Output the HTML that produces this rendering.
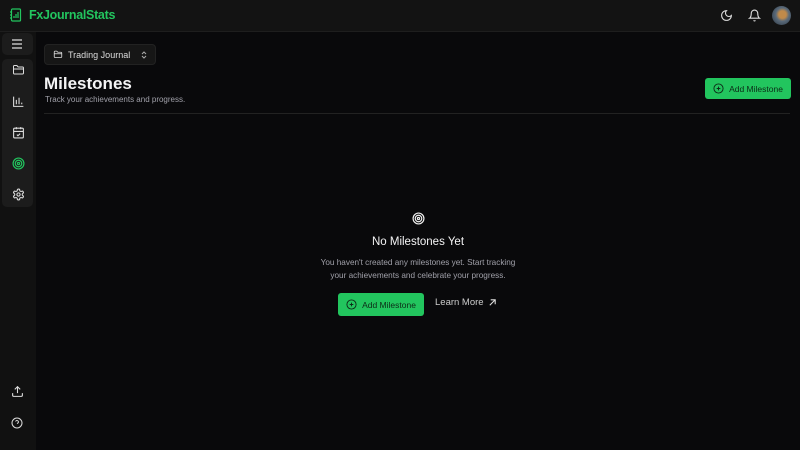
<!DOCTYPE html>
<html><head><meta charset="utf-8"><style>
*{margin:0;padding:0;box-sizing:border-box}
body{width:800px;height:450px;background:#09090b;font-family:"Liberation Sans","DejaVu Sans",sans-serif;color:#fff;overflow:hidden;position:relative}
.top{position:absolute;left:0;top:0;width:800px;height:32px;background:#131313;border-bottom:1px solid #1e1e1e}
.logo{position:absolute;left:10px;top:8px;display:flex;align-items:center;gap:7px;color:#22c55e;font-weight:bold;font-size:12.5px;letter-spacing:-0.3px}
.side{position:absolute;left:0;top:32px;width:36px;height:418px;background:#111}
.grp{position:absolute;left:2px;width:31px;background:#1c1c1c;border-radius:5px}
.ic{position:absolute;left:10px}
svg{display:block}
.sel{position:absolute;left:44px;top:44px;width:112px;height:21px;background:#161616;border:1px solid #222;border-radius:4px;font-size:9px;color:#ddd;display:flex;align-items:center;padding-left:8px;gap:5px}
h1{position:absolute;left:44px;top:74px;font-size:17px;font-weight:bold;color:#f4f4f5}
.sub{position:absolute;left:45px;top:95px;font-size:8px;color:#a1a1aa}
.hr{position:absolute;left:44px;right:10px;top:113px;height:1px;background:#222}
.btn{position:absolute;background:#22c55e;border-radius:3px;color:#0d2b17;font-size:8.5px;display:flex;align-items:center;justify-content:center;gap:5px}
.c{position:absolute;left:0;width:836px;text-align:center}
</style></head><body>
<div class="top">
 <div class="logo"><svg width="12" height="14" viewBox="0 0 12 14" fill="none" stroke="#22c55e" stroke-width="1.2"><rect x="1.5" y="1" width="9" height="12" rx="1"/><path d="M4 10V8M6 10V6M8 10V4"/><path d="M0 4h2M0 7h2M0 10h2"/></svg>FxJournalStats</div>
 <svg style="position:absolute;left:720px;top:9px" width="13" height="13" viewBox="0 0 24 24" fill="none" stroke="#ddd" stroke-width="2"><path d="M12 3a6 6 0 0 0 9 9 9 9 0 1 1-9-9Z"/></svg>
 <svg style="position:absolute;left:748px;top:9px" width="13" height="13" viewBox="0 0 24 24" fill="none" stroke="#ddd" stroke-width="2"><path d="M6 8a6 6 0 0 1 12 0c0 7 3 9 3 9H3s3-2 3-9"/><path d="M10.3 21a1.94 1.94 0 0 0 3.4 0"/></svg>
 <div style="position:absolute;left:772px;top:6px;width:19px;height:19px;border-radius:50%;background:radial-gradient(circle at 55% 45%,#c08a4a 0 25%,#5a6a7a 45%,#2a3540 100%)"></div>
</div>
<div class="side">
 <div class="grp" style="top:1px;height:22px"><svg class="ic" style="left:9px;top:6px" width="12" height="10" viewBox="0 0 12 10" stroke="#ddd" stroke-width="1.3"><path d="M1 1h10M1 5h10M1 9h10"/></svg></div>
 <div class="grp" style="top:27px;height:148px">
  <svg class="ic" style="top:5px" width="13" height="12" viewBox="0 0 24 24" fill="none" stroke="#ddd" stroke-width="2"><path d="M20 20a2 2 0 0 0 2-2V8a2 2 0 0 0-2-2h-7.9a2 2 0 0 1-1.69-.9L9.6 3.9A2 2 0 0 0 7.930 3H4a2 2 0 0 0-2 2v13a2 2 0 0 0 2 2Z"/><path d="M2 10h20"/></svg>
  <svg class="ic" style="top:36px" width="13" height="13" viewBox="0 0 24 24" fill="none" stroke="#ddd" stroke-width="2"><path d="M3 3v18h18M8 17V9M13 17V5M18 17v-3"/></svg>
  <svg class="ic" style="top:67px" width="13" height="13" viewBox="0 0 24 24" fill="none" stroke="#ddd" stroke-width="2"><rect x="3" y="4" width="18" height="18" rx="2"/><path d="M16 2v4M8 2v4M3 10h18M9 16l2 2 4-4"/></svg>
  <svg class="ic" style="top:98px" width="13" height="13" viewBox="0 0 24 24" fill="none" stroke="#22c55e" stroke-width="2.2"><circle cx="12" cy="12" r="10"/><circle cx="12" cy="12" r="6"/><circle cx="12" cy="12" r="2"/></svg>
  <svg class="ic" style="top:129px" width="13" height="13" viewBox="0 0 24 24" fill="none" stroke="#ddd" stroke-width="2"><path d="M12.22 2h-.44a2 2 0 0 0-2 2v.18a2 2 0 0 1-1 1.73l-.43.25a2 2 0 0 1-2 0l-.15-.08a2 2 0 0 0-2.730.73l-.22.38a2 2 0 0 0 .73 2.73l.15.1a2 2 0 0 1 1 1.72v.51a2 2 0 0 1-1 1.74l-.15.09a2 2 0 0 0-.73 2.73l.22.38a2 2 0 0 0 2.73.73l.15-.08a2 2 0 0 1 2 0l.43.25a2 2 0 0 1 1 1.73V20a2 2 0 0 0 2 2h.44a2 2 0 0 0 2-2v-.18a2 2 0 0 1 1-1.73l.43-.25a2 2 0 0 1 2 0l.15.08a2 2 0 0 0 2.73-.73l.22-.39a2 2 0 0 0-.73-2.73l-.15-.08a2 2 0 0 1-1-1.74v-.5a2 2 0 0 1 1-1.74l.15-.09a2 2 0 0 0 .73-2.73l-.22-.38a2 2 0 0 0-2.73-.73l-.15.08a2 2 0 0 1-2 0l-.43-.25a2 2 0 0 1-1-1.730V4a2 2 0 0 0-2-2z"/><circle cx="12" cy="12" r="3"/></svg>
 </div>
 <svg class="ic" style="top:353px;left:11px" width="13" height="13" viewBox="0 0 24 24" fill="none" stroke="#ddd" stroke-width="2"><path d="M21 15v4a2 2 0 0 1-2 2H5a2 2 0 0 1-2-2v-4M17 8l-5-5-5 5M12 3v12"/></svg>
 <svg class="ic" style="top:385px;left:11px" width="12" height="12" viewBox="0 0 24 24" fill="none" stroke="#ddd" stroke-width="2"><circle cx="12" cy="12" r="10"/><path d="M9.1 9a3 3 0 0 1 5.8 1c0 2-3 3-3 3M12 17h.01"/></svg>
</div>
<div class="sel"><svg width="10" height="9" viewBox="0 0 24 24" fill="none" stroke="#ddd" stroke-width="2.2"><path d="M20 20a2 2 0 0 0 2-2V8a2 2 0 0 0-2-2h-7.9a2 2 0 0 1-1.69-.9L9.6 3.9A2 2 0 0 0 7.93 3H4a2 2 0 0 0-2 2v13a2 2 0 0 0 2 2Z"/><path d="M2 10h20"/></svg>Trading Journal<svg style="position:absolute;right:8px;top:6px" width="6" height="8" viewBox="0 0 6 8" fill="none" stroke="#aaa" stroke-width="1"><path d="M1 3l2-2 2 2M1 5l2 2 2-2"/></svg></div>
<h1>Milestones</h1>
<div class="sub">Track your achievements and progress.</div>
<div class="btn" style="left:705px;top:78px;width:86px;height:21px"><svg width="11" height="11" viewBox="0 0 24 24" fill="none" stroke="#0d2b17" stroke-width="2"><circle cx="12" cy="12" r="10"/><path d="M8 12h8M12 8v8"/></svg>Add Milestone</div>
<div class="hr"></div>
<svg style="position:absolute;left:412px;top:212px" width="13" height="13" viewBox="0 0 24 24" fill="none" stroke="#eee" stroke-width="2.2"><circle cx="12" cy="12" r="10"/><circle cx="12" cy="12" r="6"/><circle cx="12" cy="12" r="2"/></svg>
<div class="c" style="top:236px;font-size:11.5px;color:#f4f4f5">No Milestones Yet</div>
<div class="c" style="top:256px;font-size:8.2px;line-height:13px;color:#a1a1aa">You haven't created any milestones yet. Start tracking<br>your achievements and celebrate your progress.</div>
<div class="btn" style="left:338px;top:293px;width:86px;height:23px"><svg width="11" height="11" viewBox="0 0 24 24" fill="none" stroke="#0d2b17" stroke-width="2"><circle cx="12" cy="12" r="10"/><path d="M8 12h8M12 8v8"/></svg>Add Milestone</div>
<div style="position:absolute;left:435px;top:297px;font-size:9.5px;color:#ccc;display:flex;gap:4px;align-items:center">Learn More<svg width="9" height="9" viewBox="0 0 10 10" fill="none" stroke="#ddd" stroke-width="1.2"><path d="M2 8l6-6M3 2h5v5"/></svg></div>
</body></html>
